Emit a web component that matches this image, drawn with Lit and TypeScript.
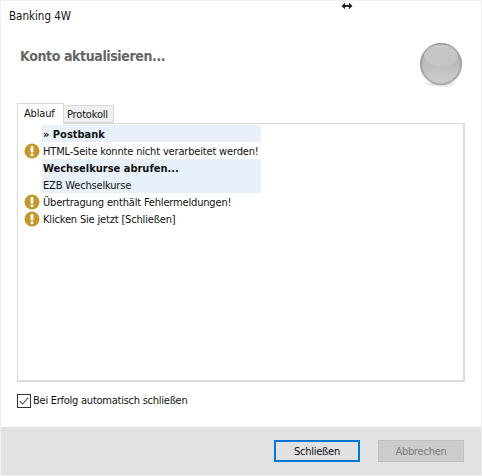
import { LitElement, html, css, svg } from "lit";
import { customElement } from "lit/decorators.js";

const warn = svg`<svg class="ic" width="16" height="16" viewBox="0 0 16 16"><circle cx="8" cy="8" r="7.5" fill="#c4982a"/><rect x="6.6" y="3" width="2.8" height="6.6" rx="1" fill="#fff"/><circle cx="8" cy="11.8" r="1.5" fill="#fff"/></svg>`;

const rows: { t: string; bold?: boolean; hl?: boolean; w?: boolean }[] = [
  { t: "» Postbank", bold: true, hl: true },
  { t: "HTML-Seite konnte nicht verarbeitet werden!", w: true },
  { t: "Wechselkurse abrufen...", bold: true, hl: true },
  { t: "EZB Wechselkurse", hl: true },
  { t: "Übertragung enthält Fehlermeldungen!", w: true },
  { t: "Klicken Sie jetzt [Schließen]", w: true },
];

@customElement("app-root")
export class AppRoot extends LitElement {
  static styles = css`
    :host { display: block; width: 482px; height: 476px; background: #fff; position: relative; overflow: hidden;
      font-family: "DejaVu Sans", sans-serif; font-stretch: condensed; font-size: 11px; color: #111; letter-spacing: -0.17px; }
    .win { height: 476px; display: flex; flex-direction: column; box-sizing: border-box; border-top: 1px solid #f0f0f0; border-left: 1px solid #f0f0f0; border-right: 1px solid #f0f0f0; border-bottom: 1px solid #f4f4f4; }
    .title { padding: 7px 0 0 8px; height: 29px; box-sizing: border-box; line-height: 16px; font-size: 11.5px; letter-spacing: 0; }
    .head { height: 73px; padding: 0 0 0 19px; display: flex; justify-content: space-between; align-items: flex-start; box-sizing: border-box; }
    h1 { margin: 0; padding-top: 16px; font: 700 14px/20px "DejaVu Sans", sans-serif; font-stretch: condensed; color: #666; letter-spacing: -0.38px; }
    .orb { margin: 12px 18px 0 0; }
    .tabs { margin-left: 16px; display: flex; align-items: flex-end; height: 20px; position: relative; z-index: 1; }
    .tab { box-sizing: border-box; line-height: 16px; }
    .tab.on { width: 47px; height: 21px; margin-bottom: -1px; background: #fff; border: 1px solid #d9d9d9; border-bottom: 0; padding: 2px 0 0 6px; }
    .tab.off { width: 50px; height: 18px; background: #f0f0f0; border: 1px solid #d9d9d9; border-left: 0; padding: 1px 0 0 3px; }
    .panel { margin-left: 16px; width: 448px; height: 259px; box-sizing: border-box; border: 1px solid #d9d9d9; border-right: 2px solid #dcdcdc; border-bottom: 2px solid #dcdcdc; padding: 1px 0 0 6px; }
    .row { display: flex; align-items: center; height: 17px; width: 237px; }
    .ic { flex: none; margin-right: 2px; display: block; }
    .spacer { width: 18px; flex: none; }
    .txt { flex: 1; height: 17px; line-height: 19px; padding-left: 1px; white-space: nowrap; }
    .hl { background: #e8f1f9; }
    .b { font-weight: 700; letter-spacing: 0; }
    .chk { margin: 12px 0 0 16px; display: flex; align-items: center; gap: 2px; height: 14px; line-height: 16px; letter-spacing: -0.25px; }
    .box { display: block; }
    .foot { margin-top: 19px; flex: 1; background: #e1e2e4; display: flex; justify-content: flex-end; align-items: flex-start; gap: 18px; padding: 13px 17px 0 0; }
    .btn { width: 86px; height: 22px; box-sizing: border-box; display: flex; align-items: center; justify-content: center; letter-spacing: -0.25px; }
    .btn.p { border: 2px solid #0078d7; background: #e1e1e1; color: #111; }
    .btn.d { border: 1px solid #bfbfbf; background: #cccccc; color: #7a7a7a; }
    .cursor { position: absolute; left: 341px; top: 1px; }
  `;

  render() {
    return html`
      <div class="win">
        <div class="title">Banking 4W</div>
        <div class="head">
          <h1>Konto aktualisieren...</h1>
          <svg class="orb" width="44" height="46" viewBox="0 0 44 46">
            <defs>
              <linearGradient id="g" x1="0" y1="0" x2="0" y2="1">
                <stop offset="0" stop-color="#a4a4a4"/><stop offset="0.5" stop-color="#bcbcbc"/><stop offset="1" stop-color="#d0d0d0"/>
              </linearGradient>
              <radialGradient id="rim" cx="50%" cy="50%" r="50%">
                <stop offset="0.86" stop-color="#888" stop-opacity="0"/><stop offset="1" stop-color="#888" stop-opacity="0.7"/>
              </radialGradient>
              <linearGradient id="s" x1="0" y1="0" x2="0" y2="1">
                <stop offset="0" stop-color="#fff" stop-opacity="0.4"/><stop offset="1" stop-color="#fff" stop-opacity="0.1"/>
              </linearGradient>
              <radialGradient id="sh" cx="50%" cy="50%" r="50%">
                <stop offset="0" stop-color="#999" stop-opacity="0.6"/><stop offset="1" stop-color="#999" stop-opacity="0"/>
              </radialGradient>
            </defs>
            <ellipse cx="22" cy="41.5" rx="17" ry="4" fill="url(#sh)"/>
            <circle cx="22" cy="22" r="21" fill="url(#g)"/>
            <circle cx="22" cy="22" r="21" fill="url(#rim)"/>
            <ellipse cx="22" cy="13.5" rx="17" ry="11" fill="url(#s)"/>
          </svg>
        </div>
        <div class="tabs">
          <div class="tab on">Ablauf</div>
          <div class="tab off">Protokoll</div>
        </div>
        <div class="panel">
          ${rows.map(
            (r) => html`<div class="row">
              ${r.w ? warn : html`<span class="spacer"></span>`}
              <span class="txt ${r.hl ? "hl" : ""} ${r.bold ? "b" : ""}">${r.t}</span>
            </div>`
          )}
        </div>
        <div class="chk">
          <svg class="box" width="14" height="14" viewBox="0 0 14 14">
            <rect x=".5" y=".5" width="13" height="13" fill="#fff" stroke="#333"/>
            <path d="M2.8 7.2 5.6 10 11.2 3.6" fill="none" stroke="#555" stroke-width="1.1"/>
          </svg>
          <span>Bei Erfolg automatisch schließen</span>
        </div>
        <div class="foot">
          <div class="btn p">Schließen</div>
          <div class="btn d">Abbrechen</div>
        </div>
      </div>
      <svg class="cursor" width="12" height="10" viewBox="0 0 12 10">
        <path d="M0.5 5 4 1.8V4H8V1.8L11.5 5 8 8.2V6H4V8.2Z" fill="#222"/>
      </svg>
    `;
  }
}
